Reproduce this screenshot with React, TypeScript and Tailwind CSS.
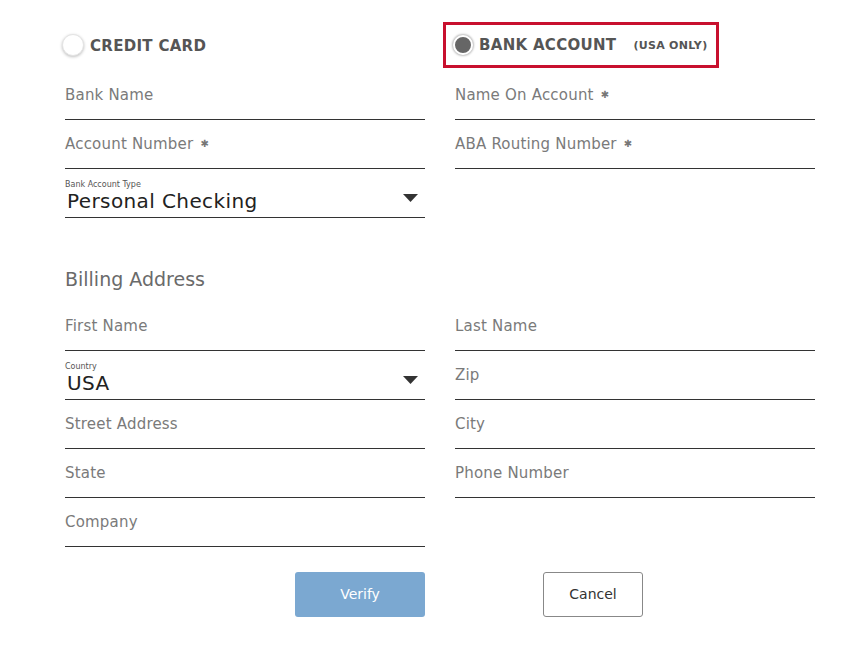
import React from "react";

const F = { fontFamily: '"DejaVu Sans", sans-serif' };

function Field({ label, req }: { label: string; req?: boolean }) {
  return (
    <div className="h-[49px] border-b border-[#333] flex items-center pt-[1px]">
      <span className="text-[15px] text-[#7a7a7a] tracking-[0.2px]">
        {label}
        {req && <span className="ml-[7px] text-[10px] text-[#777] align-[2px]">✱</span>}
      </span>
    </div>
  );
}

function Empty() {
  return <div className="h-[49px]" />;
}

function SelectField({ label, value }: { label: string; value: string }) {
  return (
    <div className="h-[49px] border-b border-[#333] flex flex-col justify-end pb-[4px] relative">
      <span className="text-[8px] leading-[9px] text-[#555]">{label}</span>
      <span className="text-[20px] leading-[24px] text-[#222] pl-[2px] tracking-[0.4px]">{value}</span>
      <svg className="absolute right-[7px] top-[25px]" width="15" height="8" viewBox="0 0 15 8">
        <polygon points="0,0 15,0 7.5,8" fill="#333" />
      </svg>
    </div>
  );
}

export default function App() {
  return (
    <div className="w-[866px] h-[648px] bg-white" style={F}>
      <div className="pl-[65px] pt-[22px] w-[815px]">
        <div className="grid grid-cols-[360px_360px] gap-x-[30px]">
          {/* header */}
          <div className="h-[49px] flex items-start pt-[12px] -ml-[3px]">
            <span className="w-[22px] h-[22px] rounded-full bg-white border border-[#e4e4e4] shadow-[0_1px_3px_rgba(0,0,0,0.25)]" />
            <span className="ml-[6px] mt-[1px] text-[15px] leading-[22px] font-bold text-[#555] tracking-[0.3px]">CREDIT CARD</span>
          </div>
          <div className="h-[49px] -ml-[12px]">
            <div className="w-[276px] h-[46px] border-[3px] border-[#c8102e] flex items-center pl-[7px]">
              <span className="w-[20px] h-[20px] rounded-full bg-[#666] border-[2px] border-white shadow-[0_0_2px_1px_rgba(0,0,0,0.25)]" />
              <span className="ml-[6px] mt-[1px] text-[15px] font-bold text-[#555] tracking-[0.3px]">BANK ACCOUNT</span>
              <span className="ml-[17px] text-[11px] font-bold text-[#555] mt-[3px] tracking-[0.3px]">(USA ONLY)</span>
            </div>
          </div>

          <Field label="Bank Name" />
          <Field label="Name On Account" req />
          <Field label="Account Number" req />
          <Field label="ABA Routing Number" req />
          <SelectField label="Bank Account Type" value="Personal Checking" />
          <Empty />

          <div className="col-span-2 h-[84px] flex items-end pb-[9px]">
            <span className="text-[19px] text-[#6a6a6a]">Billing Address</span>
          </div>

          <Field label="First Name" />
          <Field label="Last Name" />
          <SelectField label="Country" value="USA" />
          <Field label="Zip" />
          <Field label="Street Address" />
          <Field label="City" />
          <Field label="State" />
          <Field label="Phone Number" />
          <Field label="Company" />
          <Empty />

          <div className="flex justify-end pt-[25px]">
            <button className="w-[130px] h-[45px] rounded-[3px] bg-[#7ba8d1] text-white text-[14px]">Verify</button>
          </div>
          <div className="pt-[25px] pl-[88px]">
            <button className="w-[100px] h-[45px] rounded-[3px] border border-[#888] bg-white text-[#333] text-[14px]">Cancel</button>
          </div>
        </div>
      </div>
    </div>
  );
}
